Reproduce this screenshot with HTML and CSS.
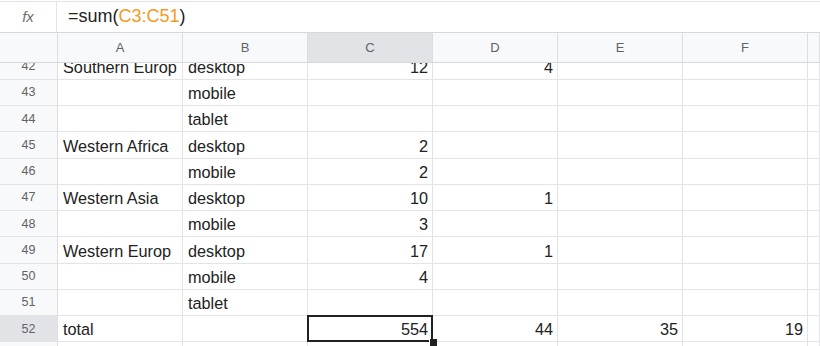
FILE: index.html
```html
<!DOCTYPE html>
<html lang="en">
<head>
    <meta charset="UTF-8">
    <title>Sheet</title>
    <link rel="stylesheet" href="styles.css">
</head>
<body>
    <div class="formula-bar">
        <div class="fx">fx</div>
        <div class="formula">=sum(<span class="ref">C3:C51</span>)</div>
    </div>

    <div class="sheet">
        <div class="row head-row">
            <div class="corner"></div>
            <div class="col-head">A</div>
            <div class="col-head">B</div>
            <div class="col-head selected">C</div>
            <div class="col-head">D</div>
            <div class="col-head">E</div>
            <div class="col-head">F</div>
            <div class="col-head"></div>
        </div>

        <div class="viewport">
            <div class="rows">
                <div class="row">
                    <div class="row-head">42</div>
                    <div class="cell">Southern Europ</div>
                    <div class="cell">desktop</div>
                    <div class="cell num">12</div>
                    <div class="cell num">4</div>
                    <div class="cell"></div><div class="cell"></div><div class="cell"></div>
                </div>
                <div class="row">
                    <div class="row-head">43</div>
                    <div class="cell"></div>
                    <div class="cell">mobile</div>
                    <div class="cell num"></div>
                    <div class="cell num"></div>
                    <div class="cell"></div><div class="cell"></div><div class="cell"></div>
                </div>
                <div class="row">
                    <div class="row-head">44</div>
                    <div class="cell"></div>
                    <div class="cell">tablet</div>
                    <div class="cell num"></div>
                    <div class="cell num"></div>
                    <div class="cell"></div><div class="cell"></div><div class="cell"></div>
                </div>
                <div class="row">
                    <div class="row-head">45</div>
                    <div class="cell">Western Africa</div>
                    <div class="cell">desktop</div>
                    <div class="cell num">2</div>
                    <div class="cell num"></div>
                    <div class="cell"></div><div class="cell"></div><div class="cell"></div>
                </div>
                <div class="row">
                    <div class="row-head">46</div>
                    <div class="cell"></div>
                    <div class="cell">mobile</div>
                    <div class="cell num">2</div>
                    <div class="cell num"></div>
                    <div class="cell"></div><div class="cell"></div><div class="cell"></div>
                </div>
                <div class="row">
                    <div class="row-head">47</div>
                    <div class="cell">Western Asia</div>
                    <div class="cell">desktop</div>
                    <div class="cell num">10</div>
                    <div class="cell num">1</div>
                    <div class="cell"></div><div class="cell"></div><div class="cell"></div>
                </div>
                <div class="row">
                    <div class="row-head">48</div>
                    <div class="cell"></div>
                    <div class="cell">mobile</div>
                    <div class="cell num">3</div>
                    <div class="cell num"></div>
                    <div class="cell"></div><div class="cell"></div><div class="cell"></div>
                </div>
                <div class="row">
                    <div class="row-head">49</div>
                    <div class="cell">Western Europ</div>
                    <div class="cell">desktop</div>
                    <div class="cell num">17</div>
                    <div class="cell num">1</div>
                    <div class="cell"></div><div class="cell"></div><div class="cell"></div>
                </div>
                <div class="row">
                    <div class="row-head">50</div>
                    <div class="cell"></div>
                    <div class="cell">mobile</div>
                    <div class="cell num">4</div>
                    <div class="cell num"></div>
                    <div class="cell"></div><div class="cell"></div><div class="cell"></div>
                </div>
                <div class="row">
                    <div class="row-head">51</div>
                    <div class="cell"></div>
                    <div class="cell">tablet</div>
                    <div class="cell num"></div>
                    <div class="cell num"></div>
                    <div class="cell"></div><div class="cell"></div><div class="cell"></div>
                </div>
                <div class="row">
                    <div class="row-head selected">52</div>
                    <div class="cell">total</div>
                    <div class="cell"></div>
                    <div class="cell num active">554</div>
                    <div class="cell num">44</div>
                    <div class="cell num">35</div>
                    <div class="cell num">19</div>
                    <div class="cell"></div>
                </div>
                <div class="row">
                    <div class="row-head">53</div>
                    <div class="cell"></div><div class="cell"></div><div class="cell"></div>
                    <div class="cell"></div><div class="cell"></div><div class="cell"></div><div class="cell"></div>
                </div>
            </div>
        </div>
    </div>
</body>
</html>
```

FILE: styles.css
```css
body {
    margin: 0;
    font-family: "Liberation Sans", Arial, sans-serif;
    background: #fff;
    color: #222;
    overflow: hidden;
}
.formula-bar {
    display: flex;
    height: 30px;
    margin-top: 1px;
    border-top: 1px solid #e3e3e3;
}
.fx {
    width: 57px;
    border-right: 1px solid #e3e3e3;
    display: flex;
    align-items: center;
    justify-content: center;
    font-style: italic;
    font-size: 15px;
    color: #6f6f6f;
    padding-bottom: 2px;
    box-sizing: border-box;
}
.formula {
    padding-left: 11px;
    font-size: 18px;
    line-height: 28px;
    color: #222;
}
.ref {
    color: #f7981d;
}
.sheet {
    border-top: 1px solid #d6d8da;
}
.row {
    display: grid;
    grid-template-columns: 58px repeat(6, 125px) 1fr;
    height: 26.25px;
}
.head-row {
    height: 30px;
    background: #f8f9fa;
    border-bottom: 1px solid #d6d8da;
    box-sizing: border-box;
}
.corner,
.col-head {
    border-right: 1px solid #dcdee1;
}
.col-head {
    display: flex;
    align-items: center;
    justify-content: center;
    font-size: 13px;
    color: #5f6368;
}
.col-head.selected {
    background: #e1e3e7;
}
.viewport {
    height: 300px;
    overflow: hidden;
}
.rows {
    margin-top: -9.5px;
}
.row-head {
    background: #f8f9fa;
    border-right: 1px solid #dcdee1;
    border-bottom: 1px solid #e3e4e6;
    display: flex;
    align-items: center;
    justify-content: center;
    font-size: 12.5px;
    color: #5f6368;
    box-sizing: border-box;
}
.row-head.selected {
    background: #e1e3e7;
}
.cell {
    border-right: 1px solid #e3e4e6;
    border-bottom: 1px solid #e3e4e6;
    box-sizing: border-box;
    font-size: 16.25px;
    padding: 0 4px 2px 5px;
    display: flex;
    align-items: flex-end;
    white-space: nowrap;
    overflow: hidden;
    color: #222;
}
.cell.num {
    justify-content: flex-end;
}
.cell.active {
    position: relative;
    overflow: visible;
}
.cell.active::after {
    content: "";
    position: absolute;
    left: -1px;
    top: -1px;
    right: -1px;
    bottom: -1px;
    border: 2px solid #202124;
    pointer-events: none;
}
.cell.active::before {
    content: "";
    position: absolute;
    right: -5px;
    bottom: -7px;
    width: 7px;
    height: 9px;
    background: #202124;
    border-left: 1px solid #fff;
    z-index: 1;
}
```
